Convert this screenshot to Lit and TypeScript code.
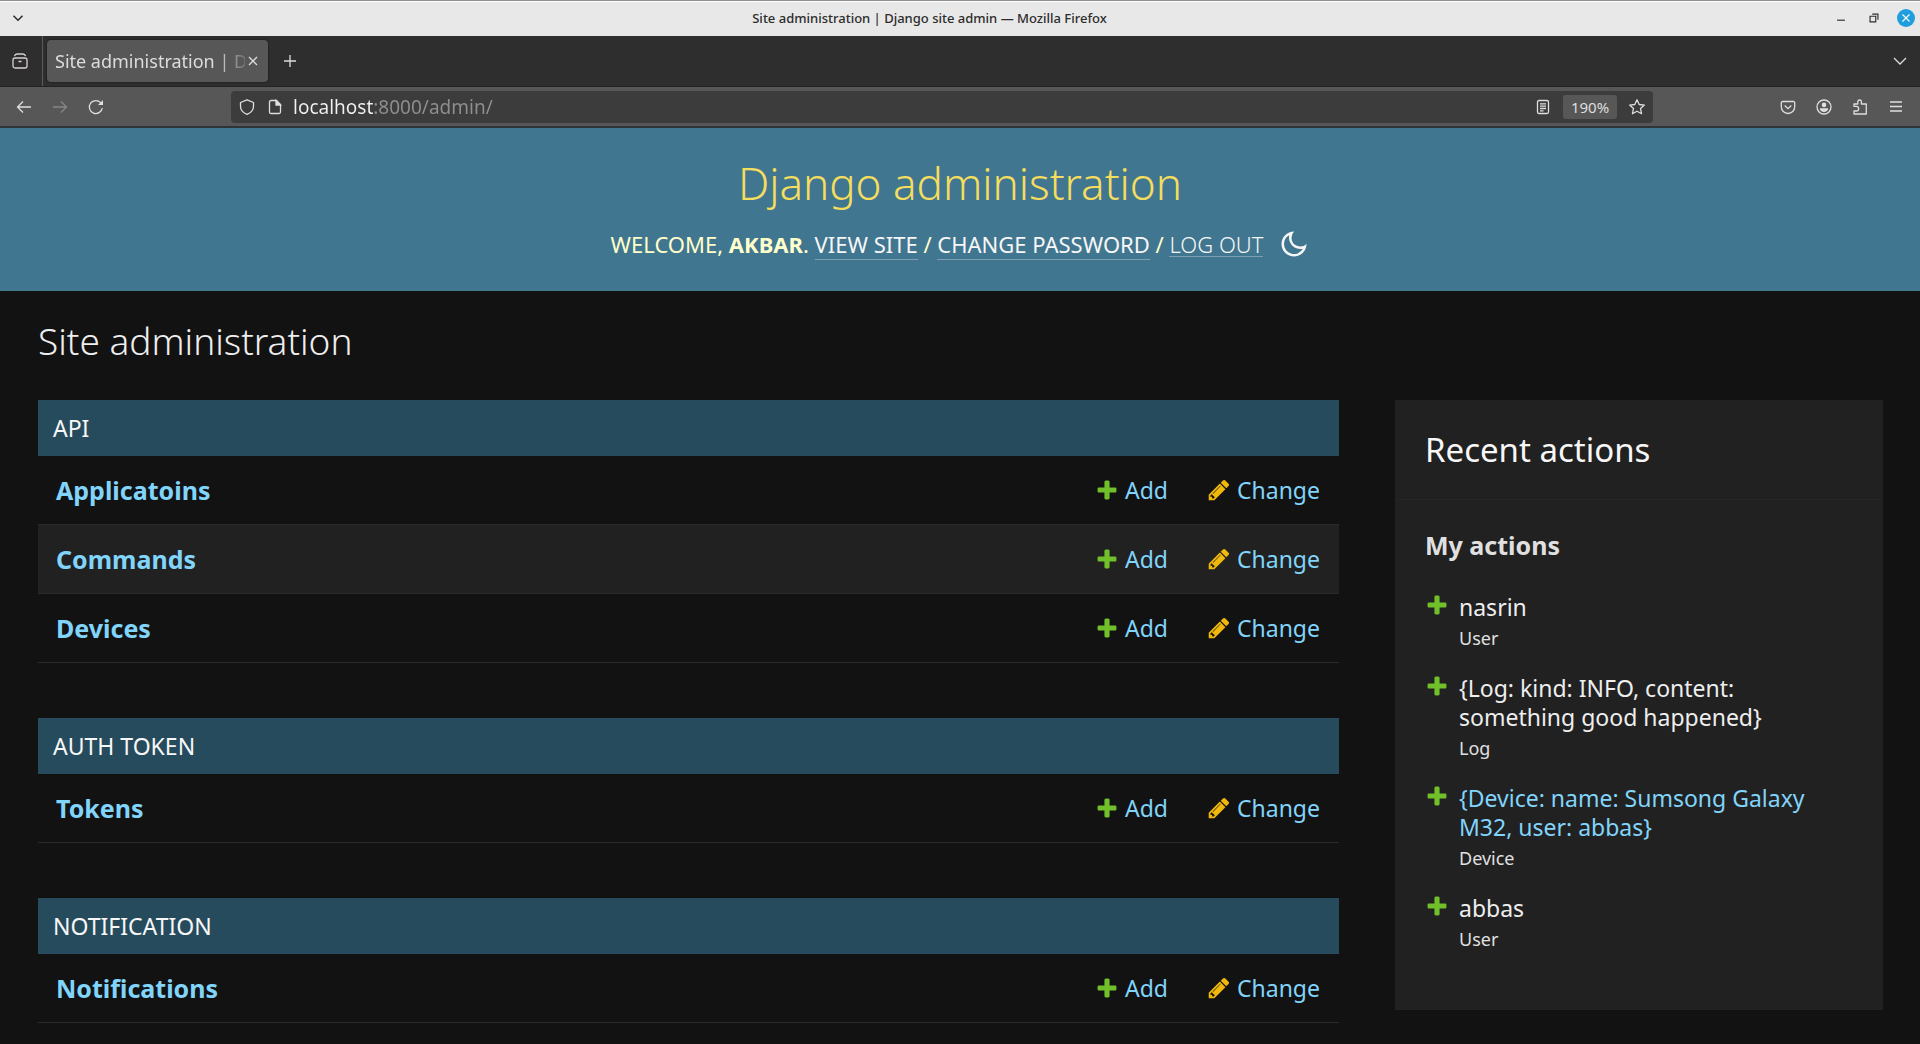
import { LitElement, html, svg, css } from "lit";
import { customElement } from "lit/decorators.js";

const plusShape = svg`<path d="M1600 796v192q0 40-28 68t-68 28h-416v416q0 40-28 68t-68 28h-192q-40 0-68-28t-28-68v-416h-416q-40 0-68-28t-28-68v-192q0-40 28-68t68-28h416v-416q0-40 28-68t68-28h192q40 0 68 28t28 68v416h416q40 0 68 28t28 68z"/>`;
const pencilShape = svg`<path d="M491 1536l91-91-235-235-91 91v107h128v128h107zm523-928q0-22-22-22-10 0-17 7l-542 542q-7 7-7 17 0 22 22 22 10 0 17-7l542-542q7-7 7-17zm-54-192l416 416-832 832h-416v-416zm683 96q0 53-37 90l-166 166-416-416 166-165q36-38 90-38 53 0 91 38l235 234q37 39 37 91z"/>`;

const plusIcon = () => html`<svg class="mark add" viewBox="0 0 1792 1792" aria-hidden="true">${plusShape}</svg>`;
const pencilIcon = () => html`<svg class="mark change" viewBox="0 0 1792 1792" aria-hidden="true">${pencilShape}</svg>`;

/* 16-unit outline icons of the browser chrome */
const icons: Record<string, unknown> = {
  tabs: svg`<rect x="1" y="5" width="14" height="10" rx="2"/><path d="M2.500 3.200Q3 1 5 1h6q2 0 2.500 2.200M6.500 8.500h3"/>`,
  back: svg`<path d="M15 8H1.500M7 2.500L1.500 8 7 13.500"/>`,
  forward: svg`<path d="M1 8h13.500M9 2.500L14.500 8 9 13.500"/>`,
  reload: svg`<path d="M14.300 9a6.500 6.500 0 1 1-1.500-5.200"/><path d="M15 1v5h-5z" fill="currentColor" stroke="none"/>`,
  shield: svg`<path d="M8 .8l6.500 2.700v3.700c0 3.600-2.500 6.500-6.500 8.200-4-1.700-6.500-4.600-6.500-8.200V3.500z" stroke-linejoin="round"/>`,
  page: svg`<path d="M4 1.500h5.500l4 4v7.500a1.500 1.500 0 0 1-1.500 1.500H4A1.500 1.500 0 0 1 2.500 13V3A1.500 1.500 0 0 1 4 1.500z"/><path d="M9 1.500v4.500h4.500z" fill="currentColor"/>`,
  reader: svg`<rect x="2.500" y="1.500" width="11" height="13" rx="1.500"/><path d="M5 4.800h6M5 7.200h6M5 9.500h6M5 11.800h3.500"/>`,
  star: svg`<path d="M8 .8l2.200 4.700 5.200.6-3.900 3.500 1.100 5.100L8 12.200l-4.600 2.500 1.100-5.100L.6 6.100l5.200-.6z" stroke-linejoin="round"/>`,
  pocket: svg`<path d="M2.500 2.500h11a1.200 1.200 0 0 1 1.200 1.200v4.100a6.700 6.700 0 0 1-13.400 0V3.700a1.200 1.200 0 0 1 1.200-1.200z"/><path d="M4.700 6.500L8 9.700l3.300-3.200"/>`,
  account: svg`<circle cx="8" cy="8" r="7"/><circle cx="8" cy="5.900" r="2.300" fill="currentColor" stroke="none"/><path d="M3.800 9.300h8.400c0 2.400-2 3.700-4.200 3.700s-4.200-1.300-4.200-3.700z" fill="currentColor" stroke="none"/>`,
  puzzle: svg`<path d="M2 7.300V5h3.800V2.800a1.800 1.800 0 0 1 3.600 0V5h4.900v10H2v-3h2.300a2.300 2.300 0 0 0 0-4.700z" stroke-linejoin="round"/>`,
  menu: svg`<path d="M2 3h12M2 7.500h12M2 12h12"/>`,
  down: svg`<path d="M2 5l6 6 6-6"/>`,
  plus: svg`<path d="M8 2v12M2 8h12"/>`,
  cross: svg`<path d="M4 4l8 8M12 4l-8 8"/>`,
  minimize: svg`<path d="M3.500 10.500h9"/>`,
  restore: svg`<path d="M3.500 6h6.500v6.500H3.500zM6 3.500h6.500V10"/>`,
};
const glyph = (name: string) =>
  html`<svg class="glyph" viewBox="0 0 16 16" aria-hidden="true">${icons[name]}</svg>`;
const tool = (name: string, label: string, extra = "") =>
  html`<button class="tool ${extra}" type="button" aria-label=${label}>${glyph(name)}</button>`;

const reset = css`
  :host { display: block; font-family: "Noto Sans", "Open Sans", sans-serif; }
  *, *::before, *::after { box-sizing: border-box; }
  button { border: 0; margin: 0; padding: 0; background: none; color: inherit; font: inherit; cursor: pointer; }
  a { color: inherit; text-decoration: none; }
  h1, h2, h3, ul { margin: 0; padding: 0; }
  svg { display: block; flex: none; }
`;

@customElement("browser-chrome")
class BrowserChrome extends LitElement {
  static styles = [reset, css`
    .glyph { width: 16px; height: 16px; fill: none; stroke: currentColor; stroke-width: 1.3; }
    .titlebar {
      display: flex; align-items: center;
      height: 36px; padding: 0 5px 1px 8px; background: #e8e8e8; color: #2c2c2c;
      border-top: 1px solid #8f8f8f; box-shadow: inset 0 1px #fff;
    }
    .caption { flex: 1; text-align: center; font-size: 13px; font-weight: 500; line-height: 18px; }
    .tool { display: grid; place-items: center; width: 20px; height: 20px; }
    .controls { display: flex; justify-content: flex-end; align-items: center; gap: 13px; }
    .controls .glyph { width: 14px; height: 14px; }
    .first .glyph { width: 12px; height: 12px; stroke-width: 2; }
    .controls .close { background: #1f9ede; color: #fff; border-radius: 50%; width: 18px; height: 18px; }
    .tabbar {
      display: flex; align-items: center; height: 51px; background: #2e2e2e; color: #dcdcdc;
      border-bottom: 1px solid #232323; padding-right: 10px;
    }
    .view { display: grid; place-items: center; width: 43px; height: 50px; padding-right: 2px; border-right: 1px solid #5a5a5a; color: #d8cfd2; }
    .tab {
      display: flex; align-items: center; width: 221px; height: 42px; margin: 0 12px 0 4px;
      padding: 0 9px 0 8px; border-radius: 4px; background: #575757; box-shadow: 0 0 2px #111;
    }
    .name {
      flex: 1; min-width: 0; overflow: hidden; white-space: nowrap; font-size: 18px; line-height: 26px;
      mask-image: linear-gradient(to right, #000 84%, transparent 104%);
    }
    .tab .tool { width: 14px; }
    .spacer { flex: 1; }
    .toolbar {
      display: flex; align-items: center; height: 41px; padding: 0 14px; background: #575757;
      color: #dedede; border-bottom: 2px solid #2f3436;
    }
    .nav { display: flex; gap: 16px; width: 217px; }
    .dim { color: #868686; }
    .address {
      display: flex; align-items: center; flex: 1; height: 32px; padding: 0 6px; gap: 8px;
      border-radius: 4px; background: #3c3c3c;
    }
    .url {
      flex: 1; min-width: 0; height: 30px; border: 0; padding: 0; outline: 0; font: inherit; font-size: 19px;
      color: transparent;
      background: linear-gradient(to right, #f2f2f2 81px, #8f8f8f 81px) no-repeat;
      -webkit-background-clip: text; background-clip: text;
    }
    .page-tools { display: flex; align-items: center; gap: 10px; }
    .zoom { width: 54px; height: 24px; border-radius: 3px; background: #575757; font-size: 15px; line-height: 24px; }
    .right { display: flex; justify-content: flex-end; gap: 16px; width: 253px; }
  `];

  render() {
    return html`
      <header class="titlebar">
        <div class="first">${tool("down", "Window menu")}</div>
        <div class="caption">Site administration | Django site admin — Mozilla Firefox</div>
        <div class="controls">
          ${tool("minimize", "Minimize")} ${tool("restore", "Restore")} ${tool("cross", "Close window", "close")}
        </div>
      </header>
      <div class="tabbar">
        <button class="view" type="button" aria-label="Recent browsing">${glyph("tabs")}</button>
        <div class="tab">
          <span class="name">Site administration | Django site admin</span>
          ${tool("cross", "Close tab")}
        </div>
        ${tool("plus", "New tab")}
        <div class="spacer"></div>
        ${tool("down", "List all tabs")}
      </div>
      <div class="toolbar">
        <div class="nav">
          ${tool("back", "Back")} ${tool("forward", "Forward", "dim")} ${tool("reload", "Reload")}
        </div>
        <div class="address">
          ${tool("shield", "Tracking protection")} ${tool("page", "Site information")}
          <input class="url" type="text" aria-label="Address" .value=${"localhost:8000/admin/"} />
          <div class="page-tools">
            ${tool("reader", "Reader view")}
            <button class="zoom" type="button">190%</button>
            ${tool("star", "Bookmark")}
          </div>
        </div>
        <div class="right">
          ${tool("pocket", "Pocket")} ${tool("account", "Account")} ${tool("puzzle", "Extensions")} ${tool("menu", "Menu")}
        </div>
      </div>
    `;
  }
}

interface AppModule { title: string; models: string[]; }
interface Action { text: string; kind: string; linked?: boolean; }

const modules: AppModule[] = [
  { title: "API", models: ["Applicatoins", "Commands", "Devices"] },
  { title: "Auth Token", models: ["Tokens"] },
  { title: "Notification", models: ["Notifications"] },
];

const actions: Action[] = [
  { text: "nasrin", kind: "User" },
  { text: "{Log: kind: INFO, content: something good happened}", kind: "Log" },
  { text: "{Device: name: Sumsong Galaxy M32, user: abbas}", kind: "Device", linked: true },
  { text: "abbas", kind: "User" },
];

@customElement("admin-page")
class AdminPage extends LitElement {
  static styles = [reset, css`
    :host { color: #eeeeee; }
    .branding { display: flex; flex-direction: column; align-items: center; gap: 18px; padding: 27px 38px 32px; background: #417690; }
    .site { font-size: 44px; line-height: 56px; font-weight: 300; color: #f5dd5d; }
    .user { display: flex; align-items: center; gap: 16px; font-size: 22px; line-height: 26px; color: #ffffcc; text-transform: uppercase; }
    .user a { color: #f7f7f7; border-bottom: 1px solid #7f9fb1; }
    .logout { color: #f7f7f7; font-weight: 300; text-transform: inherit; line-height: 24px; border-bottom: 1px solid #7f9fb1; }
    .moon { width: 30px; height: 30px; fill: #f7f7f7; }
    .content { display: flex; flex-direction: column; gap: 37px; padding: 28px 37px 21px 38px; }
    .heading { font-size: 37px; line-height: 44px; font-weight: 300; }
    .columns { display: flex; align-items: flex-start; gap: 56px; }
    .main { flex: 1; display: flex; flex-direction: column; gap: 55px; }
    .module { width: 100%; border-collapse: collapse; font-size: 23px; line-height: 28px; }
    .module caption { padding: 14px 15px; background: #264b5d; color: #f7f7f7; text-align: left; text-transform: uppercase; }
    .module tr { border-bottom: 1px solid #2b2b2b; }
    .module tr:nth-child(even) { background: #212121; }
    .module th { padding: 20px 18px; text-align: left; font-size: 25px; font-weight: 700; }
    .module td { padding: 20px 0; }
    .add-cell { width: 112px; }
    .change-cell { width: 132px; }
    .module tbody a { color: #81d4fa; }
    .action { display: flex; align-items: center; gap: 6px; }
    .mark { width: 24px; height: 24px; }
    .mark.add { fill: #70bf2b; }
    .mark.change { fill: #efb80b; }
    .side { width: 488px; background: #212121; padding-bottom: 56px; }
    .recent { padding: 29px 30px 28px; font-size: 33px; line-height: 42px; font-weight: 400; color: #f7f7f7; border-bottom: 1px solid #262626; }
    .mine { padding: 30px 30px 0; font-size: 25px; line-height: 30px; font-weight: 700; color: #e0e0e0; }
    .list { display: flex; flex-direction: column; gap: 21px; padding: 33px 30px 0; list-style: none; }
    .item { display: flex; gap: 10px; font-size: 23px; line-height: 29px; }
    .item a { color: #81d4fa; }
    .kind { padding-top: 2px; font-size: 18px; color: #e0e0e0; line-height: 29px; }
  `];

  render() {
    return html`
      <header class="branding">
        <h1 class="site"><a href="#admin">Django administration</a></h1>
        <div class="user">
          <div>Welcome, <strong>akbar</strong>. <a href="#site">View site</a> / <a href="#password">Change password</a> / <button class="logout" type="button">Log out</button></div>
          <button type="button" aria-label="Toggle theme">
            <svg class="moon" viewBox="0 0 24 24" aria-hidden="true"><path d="M10 7a7 7 0 0 0 12 4.900v.1c0 5.523-4.477 10-10 10S2 17.523 2 12 6.477 2 12 2h.1A6.979 6.979 0 0 0 10 7zm-6 5a8 8 0 0 0 15.062 3.762A9 9 0 0 1 8.238 4.938 7.999 7.999 0 0 0 4 12z"/></svg>
          </button>
        </div>
      </header>
      <main class="content">
        <h1 class="heading">Site administration</h1>
        <div class="columns">
          <div class="main">${modules.map((m) => this.module(m))}</div>
          <aside class="side">
            <h2 class="recent">Recent actions</h2>
            <h3 class="mine">My actions</h3>
            <ul class="list">${actions.map((a) => this.action(a))}</ul>
          </aside>
        </div>
      </main>
    `;
  }

  private module(m: AppModule) {
    return html`
      <table class="module">
        <caption><a href="#app">${m.title}</a></caption>
        <tbody>
          ${m.models.map((name) => html`
            <tr>
              <th scope="row"><a href="#model">${name}</a></th>
              <td class="add-cell"><a class="action" href="#add">${plusIcon()}Add</a></td>
              <td class="change-cell"><a class="action" href="#change">${pencilIcon()}Change</a></td>
            </tr>`)}
        </tbody>
      </table>
    `;
  }

  private action(a: Action) {
    return html`
      <li class="item">
        ${plusIcon()}
        <div>
          ${a.linked ? html`<a href="#object">${a.text}</a>` : html`<span>${a.text}</span>`}
          <div class="kind">${a.kind}</div>
        </div>
      </li>
    `;
  }
}

@customElement("app-root")
class AppRoot extends LitElement {
  static styles = css`
    :host { display: block; min-height: 100vh; background: #121212; }
  `;

  render() {
    return html`<browser-chrome></browser-chrome><admin-page></admin-page>`;
  }
}
